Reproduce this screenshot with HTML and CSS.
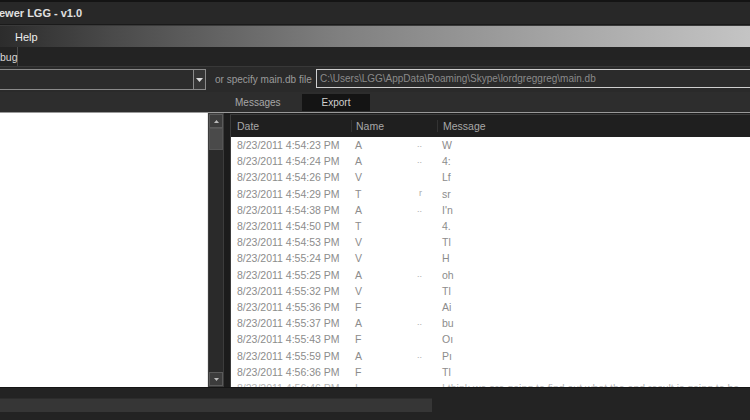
FILE: index.html
```html
<!DOCTYPE html>
<html>
<head>
<meta charset="utf-8">
<link rel="stylesheet" href="styles.css">
</head>
<body>
<div class="app">
  <div class="titlebar"><span class="title">ewer LGG - v1.0</span></div>
  <div class="menubar"><span class="menu-item">Help</span></div>
  <div class="tabs"><span class="tab">bug</span></div>
  <div class="pathrow">
    <div class="combo"><div class="combo-btn"><svg width="7" height="4" viewBox="0 0 7 4"><path d="M0 0h7L3.5 4z" fill="#ddd"/></svg></div></div>
    <span class="or-label">or specify main.db file</span>
    <div class="pathbox">C:\Users\LGG\AppData\Roaming\Skype\lordgreggreg\main.db</div>
  </div>
  <div class="toolrow">
    <span class="msg-label">Messages</span>
    <button class="export">Export</button>
  </div>
  <div class="main">
    <div class="listbox"></div>
    <div class="scrollbar">
      <div class="sb-btn"><svg width="5" height="3" viewBox="0 0 5 3"><path d="M0 3h5L2.5 0z" fill="#bbb"/></svg></div>
      <div class="sb-thumb"></div>
      <div class="sb-track"></div>
      <div class="sb-btn"><svg width="5" height="3" viewBox="0 0 5 3"><path d="M0 0h5L2.5 3z" fill="#bbb"/></svg></div>
    </div>
    <div class="listview">
      <div class="lv-header">
        <span class="col-date">Date</span>
        <span class="col-name">Name</span>
        <span class="col-msg">Message</span>
      </div>
      <div class="lv-body">
        <div class="row"><span class="col-date">8/23/2011 4:54:23 PM</span><span class="col-name">A<i>..</i></span><span class="col-msg">W</span></div>
        <div class="row"><span class="col-date">8/23/2011 4:54:24 PM</span><span class="col-name">A<i>..</i></span><span class="col-msg">4:</span></div>
        <div class="row"><span class="col-date">8/23/2011 4:54:26 PM</span><span class="col-name">V<i></i></span><span class="col-msg">Lf</span></div>
        <div class="row"><span class="col-date">8/23/2011 4:54:29 PM</span><span class="col-name">T<i>r</i></span><span class="col-msg">sr</span></div>
        <div class="row"><span class="col-date">8/23/2011 4:54:38 PM</span><span class="col-name">A<i>..</i></span><span class="col-msg">I'n</span></div>
        <div class="row"><span class="col-date">8/23/2011 4:54:50 PM</span><span class="col-name">T<i></i></span><span class="col-msg">4.</span></div>
        <div class="row"><span class="col-date">8/23/2011 4:54:53 PM</span><span class="col-name">V<i></i></span><span class="col-msg">Tl</span></div>
        <div class="row"><span class="col-date">8/23/2011 4:55:24 PM</span><span class="col-name">V<i></i></span><span class="col-msg">H</span></div>
        <div class="row"><span class="col-date">8/23/2011 4:55:25 PM</span><span class="col-name">A<i>..</i></span><span class="col-msg">oh</span></div>
        <div class="row"><span class="col-date">8/23/2011 4:55:32 PM</span><span class="col-name">V<i></i></span><span class="col-msg">Tl</span></div>
        <div class="row"><span class="col-date">8/23/2011 4:55:36 PM</span><span class="col-name">F<i></i></span><span class="col-msg">Ai</span></div>
        <div class="row"><span class="col-date">8/23/2011 4:55:37 PM</span><span class="col-name">A<i>..</i></span><span class="col-msg">bu</span></div>
        <div class="row"><span class="col-date">8/23/2011 4:55:43 PM</span><span class="col-name">F<i></i></span><span class="col-msg">Oı</span></div>
        <div class="row"><span class="col-date">8/23/2011 4:55:59 PM</span><span class="col-name">A<i>..</i></span><span class="col-msg">Pı</span></div>
        <div class="row"><span class="col-date">8/23/2011 4:56:36 PM</span><span class="col-name">F<i></i></span><span class="col-msg">Tl</span></div>
        <div class="row faint"><span class="col-date">8/23/2011 4:56:46 PM</span><span class="col-name">I<i></i></span><span class="col-msg">I think we are going to find out what the end result is going to be</span></div>
      </div>
    </div>
  </div>
  <div class="statusbar">
    <div class="progress"></div>
  </div>
</div>
</body>
</html>
```

FILE: styles.css
```css
* { box-sizing: border-box; }
html, body { margin: 0; padding: 0; }
body {
  width: 750px;
  height: 420px;
  overflow: hidden;
  background: #1f1f1f;
  font-family: "Liberation Sans", Arial, sans-serif;
  font-size: 10.5px;
}
.app { display: flex; flex-direction: column; height: 420px; }

.titlebar {
  height: 25px;
  border-top: 2px solid #141414;
  border-bottom: 1px solid #1a1a1a;
  background: #282828;
  display: flex;
  align-items: center;
}
.title { color: #e0e0e0; font-weight: bold; font-size: 11px; margin-left: -1px; }

.menubar {
  height: 22px;
  background: linear-gradient(to right, #2c2c2c 0%, #4a4a4a 15%, #7f7f7f 45%, #a6a6a6 75%, #c4c4c4 100%);
  border-top: 1px solid #3a3a3a;
  display: flex;
  align-items: center;
}
.menu-item { color: #eeeeee; font-size: 11px; margin-left: 15px; }

.tabs {
  height: 20px;
  background: #232323;
  border-bottom: 1px solid #383838;
  display: flex;
  align-items: stretch;
}
.tab {
  color: #d8d8d8;
  font-size: 10.5px;
  width: 18px;
  border-right: 1px solid #4a4a4a;
  display: flex;
  align-items: center;
  white-space: nowrap;
}

.pathrow {
  height: 25px;
  background: #2a2a2a;
  display: flex;
  align-items: center;
}
.combo {
  width: 206px;
  height: 21px;
  border: 1px solid #8a8a8a;
  border-left: none;
  background: #2c2c2c;
  display: flex;
  justify-content: flex-end;
}
.combo-btn {
  width: 12px;
  border-left: 1px solid #8a8a8a;
  background: #353535;
  display: flex;
  align-items: center;
  justify-content: center;
}
.or-label { color: #9a9a9a; font-size: 10px; margin-left: 9px; width: 101px; white-space: nowrap; }
.pathbox {
  flex: 1;
  height: 19px;
  margin-top: -3px;
  border: 1px solid #cfcfcf;
  border-right: none;
  background: #2b2b2b;
  color: #8a8a8a;
  font-size: 10px;
  padding-left: 3px;
  display: flex;
  align-items: center;
  white-space: nowrap;
}

.toolrow {
  height: 21px;
  background: #2d2d2d;
  border-bottom: 1px solid #9a9a9a;
  display: flex;
  align-items: center;
  padding-left: 235px;
}
.msg-label { color: #a8a8a8; font-size: 10px; width: 67px; }
.export {
  width: 68px;
  height: 17px;
  background: #141414;
  border: none;
  color: #d0d0d0;
  font-family: "Liberation Sans", Arial, sans-serif;
  font-size: 10px;
  padding: 0;
}

.main {
  height: 274px;
  display: flex;
  background: #1c1c1c;
}
.listbox {
  width: 208px;
  background: #ffffff;
  border-right: 1px solid #e8e8e8;
}
.scrollbar {
  width: 16px;
  background: #2e2e2e;
  border: 1px solid #3c3c3c;
  display: flex;
  flex-direction: column;
}
.sb-btn {
  height: 14px;
  background: #3c3c3c;
  border: 1px solid #5a5a5a;
  display: flex;
  align-items: center;
  justify-content: center;
}
.sb-thumb { height: 22px; background: #4a4a4a; border: 1px solid #555; }
.sb-track { flex: 1; background: #2a2a2a; }

.listview {
  flex: 1;
  margin-left: 6px;
  margin-top: 1px;
  border-left: 1px solid #3c3c3c;
  background: #ffffff;
  display: flex;
  flex-direction: column;
  overflow: hidden;
}
.lv-header {
  height: 23px;
  flex: none;
  background: #1f1f1f;
  border-top: 1px solid #3a3a3a;
  color: #a8a8a8;
  display: flex;
  align-items: center;
}
.lv-header .col-name, .lv-header .col-msg { border-left: 1px solid #333; }
.lv-body { flex: 1; overflow: hidden; }
.row {
  height: 16.2px;
  display: flex;
  align-items: center;
  color: #8c8c8c;
  white-space: nowrap;
}
.row.faint { color: #b4b4b4; }
.col-date { width: 120px; padding-left: 6px; flex: none; }
.col-name { width: 86px; padding-left: 4px; flex: none; display: flex; }
.col-name i { font-style: normal; margin-left: auto; margin-right: 15px; color: #aaa; font-size: 9px; }
.col-msg { padding-left: 5px; flex: none; }

.statusbar {
  flex: 1;
  background: #232323;
  border-top: 1px solid #151515;
  padding-top: 10px;
}
.progress { width: 432px; height: 14px; background: #363636; border-top: 1px solid #2c2c2c; }
```
